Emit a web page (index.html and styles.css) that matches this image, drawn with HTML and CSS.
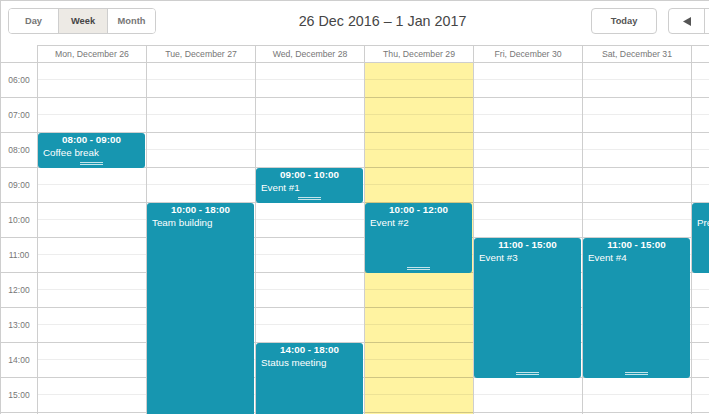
FILE: index.html
```html
<!DOCTYPE html>
<html>
<head>
<meta charset="utf-8">
<link rel="stylesheet" href="styles.css">
</head>
<body>
<div class="scheduler">
  <div class="nav">
    <div class="nav-left">
      <div class="tabs">
        <div class="tab tab-day">Day</div>
        <div class="tab tab-week active">Week</div>
        <div class="tab tab-month">Month</div>
      </div>
    </div>
    <div class="date">26 Dec 2016 – 1 Jan 2017</div>
    <div class="nav-right">
      <div class="btn today">Today</div>
      <div class="arrows">
        <div class="arrow prev"><svg width="8" height="9" viewBox="0 0 8 9"><polygon points="8,0 8,9 0,4.5" fill="#555"/></svg></div>
        <div class="arrow next"><svg width="8" height="9" viewBox="0 0 8 9"><polygon points="0,0 0,9 8,4.5" fill="#555"/></svg></div>
      </div>
    </div>
  </div>

  <div class="header">
    <div class="corner"></div>
    <div class="day-head">Mon, December 26</div>
    <div class="day-head">Tue, December 27</div>
    <div class="day-head">Wed, December 28</div>
    <div class="day-head">Thu, December 29</div>
    <div class="day-head">Fri, December 30</div>
    <div class="day-head">Sat, December 31</div>
    <div class="day-head">Sun, January 1</div>
  </div>

  <div class="body">
    <div class="scale">
      <div class="hour">06:00</div>
      <div class="hour">07:00</div>
      <div class="hour">08:00</div>
      <div class="hour">09:00</div>
      <div class="hour">10:00</div>
      <div class="hour">11:00</div>
      <div class="hour">12:00</div>
      <div class="hour">13:00</div>
      <div class="hour">14:00</div>
      <div class="hour">15:00</div>
    </div>
    <div class="col">
      <div class="ev" style="top:70px;height:35px">
        <div class="ev-time">08:00 - 09:00</div>
        <div class="ev-title">Coffee break</div>
        <div class="ev-handle"></div>
      </div>
    </div>
    <div class="col">
      <div class="ev" style="top:140px;height:280px">
        <div class="ev-time">10:00 - 18:00</div>
        <div class="ev-title">Team building</div>
        <div class="ev-handle"></div>
      </div>
    </div>
    <div class="col">
      <div class="ev" style="top:105px;height:35px">
        <div class="ev-time">09:00 - 10:00</div>
        <div class="ev-title">Event #1</div>
        <div class="ev-handle"></div>
      </div>
      <div class="ev" style="top:280px;height:140px">
        <div class="ev-time">14:00 - 18:00</div>
        <div class="ev-title">Status meeting</div>
        <div class="ev-handle"></div>
      </div>
    </div>
    <div class="col today-col">
      <div class="ev" style="top:140px;height:70px">
        <div class="ev-time">10:00 - 12:00</div>
        <div class="ev-title">Event #2</div>
        <div class="ev-handle"></div>
      </div>
    </div>
    <div class="col">
      <div class="ev" style="top:175px;height:140px">
        <div class="ev-time">11:00 - 15:00</div>
        <div class="ev-title">Event #3</div>
        <div class="ev-handle"></div>
      </div>
    </div>
    <div class="col">
      <div class="ev" style="top:175px;height:140px">
        <div class="ev-time">11:00 - 15:00</div>
        <div class="ev-title">Event #4</div>
        <div class="ev-handle"></div>
      </div>
    </div>
    <div class="col">
      <div class="ev" style="top:140px;height:70px">
        <div class="ev-time">10:00 - 12:00</div>
        <div class="ev-title">Presentation</div>
        <div class="ev-handle"></div>
      </div>
    </div>
  </div>
</div>
</body>
</html>
```

FILE: styles.css
```css
html, body {
  margin: 0;
  padding: 0;
  overflow: hidden;
  background: #fff;
}

body {
  font-family: "Liberation Sans", Arial, sans-serif;
}

.scheduler {
  width: 830px;
  border-top: 1px solid #cecece;
  border-left: 1px solid #cecece;
}

/* navigation */
.nav {
  width: 763px;
  height: 26px;
  padding: 7px 0 11px;
  display: grid;
  grid-template-columns: 1fr auto 1fr;
  align-items: center;
}

.nav-left {
  display: flex;
  padding-left: 7px;
}

.tabs {
  display: flex;
  height: 24px;
  border: 1px solid #cecece;
  border-radius: 4px;
  overflow: hidden;
}

.tab {
  display: flex;
  align-items: center;
  justify-content: center;
  font-size: 9.3px;
  font-weight: bold;
  color: #767676;
  background: #fff;
}

.tab-day {
  width: 49px;
  border-right: 1px solid #cecece;
}

.tab-week {
  width: 48px;
  border-right: 1px solid #cecece;
}

.tab-month {
  width: 47px;
}

.tab.active {
  background: #edeae5;
  color: #454545;
}

.date {
  font-size: 14.3px;
  color: #454545;
  text-align: center;
  white-space: nowrap;
}

.nav-right {
  display: flex;
  justify-content: flex-end;
  padding-right: 22px;
}

.btn {
  display: flex;
  align-items: center;
  justify-content: center;
  height: 24px;
  border: 1px solid #cecece;
  border-radius: 4px;
  font-size: 9.3px;
  font-weight: bold;
  color: #555;
}

.today {
  width: 64px;
  margin-right: 11px;
}

.arrows {
  display: flex;
  height: 24px;
  border: 1px solid #cecece;
  border-radius: 4px;
}

.arrow {
  display: flex;
  align-items: center;
  justify-content: center;
}

.prev {
  width: 35px;
  border-right: 1px solid #cecece;
}

.next {
  width: 36px;
}

/* header */
.header {
  display: flex;
  border-bottom: 1px solid #cecece;
}

.corner {
  width: 36px;
  flex: none;
  height: 17px;
}

.day-head {
  width: 108px;
  flex: none;
  height: 16px;
  line-height: 16px;
  border-top: 1px solid #cecece;
  border-left: 1px solid #cecece;
  text-align: center;
  font-size: 8.7px;
  color: #767676;
  white-space: nowrap;
  overflow: hidden;
}

/* body */
.body {
  display: flex;
  height: 420px;
}

.scale {
  width: 36px;
  flex: none;
  background-image: repeating-linear-gradient(to bottom,
    transparent 0, transparent 34px,
    #cecece 34px, #cecece 35px);
}

.hour {
  height: 35px;
  line-height: 34px;
  text-align: center;
  font-size: 8.5px;
  color: #767676;
}

.col {
  position: relative;
  width: 108px;
  flex: none;
  border-left: 1px solid #cecece;
  background-image: repeating-linear-gradient(to bottom,
    transparent 0, transparent 16px,
    rgba(0, 0, 0, 0.07) 16px, rgba(0, 0, 0, 0.07) 17px,
    transparent 17px, transparent 34px,
    rgba(0, 0, 0, 0.19) 34px, rgba(0, 0, 0, 0.19) 35px);
}

.today-col {
  background-color: #fff3a1;
}

/* events */
.ev {
  position: absolute;
  left: 0;
  width: 107px;
  background: #1796b0;
  border-radius: 3px;
  color: #fff;
  overflow: hidden;
}

.ev-time {
  font-size: 9.8px;
  font-weight: bold;
  line-height: 13px;
  text-align: center;
  white-space: nowrap;
}

.ev-title {
  font-size: 9.8px;
  line-height: 12px;
  padding: 1px 5px 0;
  white-space: nowrap;
}

.ev-handle {
  position: absolute;
  bottom: 3px;
  left: 50%;
  width: 23px;
  margin-left: -12px;
  height: 1px;
  border-top: 1px solid rgba(255, 255, 255, 0.75);
  border-bottom: 1px solid rgba(255, 255, 255, 0.75);
}
```
